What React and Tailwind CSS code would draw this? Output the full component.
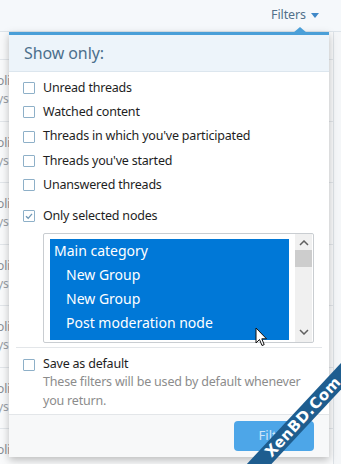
import React from "react";

const font = { fontFamily: '"Noto Sans", "Open Sans", sans-serif' };

function Box({ checked }) {
  return (
    <span className="relative inline-block w-[12px] h-[12px] shrink-0 border-[1.5px] border-[#8eb0c8] rounded-[1px] bg-white">
      {checked && (
        <svg viewBox="0 0 12 12" className="absolute left-[-1.5px] top-[-1.5px] w-[12px] h-[12px]">
          <path d="M3 6.2 L5.2 8.3 L9 3.8" fill="none" stroke="#6f97b5" strokeWidth="1.3" />
        </svg>
      )}
    </span>
  );
}

function Row({ label, checked }) {
  return (
    <div className="h-[24.25px] flex items-center pl-[14px] gap-[8px] text-[12.5px] tracking-[-0.2px] text-[#1e1e1e]">
      <Box checked={checked} />
      <span>{label}</span>
    </div>
  );
}

export default function App() {
  const rows = [0, 1, 2, 3, 4, 5, 6];
  return (
    <div className="relative w-[341px] h-[464px] overflow-hidden bg-[#f4f6f8]" style={font}>
      {/* top bar */}
      <div className="h-[32px] bg-[#f5f8fb] border-b border-[#dde4ea] flex items-center justify-end pr-[22px] gap-[5px] text-[12.5px] tracking-[-0.1px] text-[#52708a]">
        <span>Filters</span>
        <svg width="8" height="6" viewBox="0 0 8 6"><path d="M0 0 H8 L4 5 Z" fill="#3f88c8" /></svg>
      </div>
      {/* background list */}
      <div className="mr-[7px] border-r border-[#dde2e7] bg-white">
        <div className="h-[28px] border-b border-[#e2e6ea] bg-[#f8f9fa]"></div>
        {rows.map((r) => (
          <div key={r} className="h-[61.5px] border-b border-[#e2e6ea] flex flex-col justify-center text-[12px] leading-[18px] bg-[#f9fafb]">
            <span className="text-[#8a8f95] -ml-[3px]">oli</span>
            <span className="text-[#9aa0a6] -ml-[3px]">ys:</span>
          </div>
        ))}
      </div>

      {/* menu */}
      <div className="absolute left-[9px] top-[32px] w-[320px] bg-white border-t-[3px] border-[#4a9fd8] shadow-[0_3px_8px_rgba(0,0,0,0.25)]">
        <div className="absolute right-[22px] top-[-8px] w-0 h-0 border-l-[7px] border-r-[7px] border-b-[6px] border-l-transparent border-r-transparent border-b-[#4a9fd8]"></div>
        <div className="h-[37px] bg-[#edf4fa] border-b border-[#dce6ee] flex items-center pl-[15px] text-[16px] tracking-[-0.1px] text-[#4c6f8c]">
          Show only:
        </div>
        <div className="pt-[4px]">
          <Row label="Unread threads" />
          <Row label="Watched content" />
          <Row label="Threads in which you've participated" />
          <Row label="Threads you've started" />
          <Row label="Unanswered threads" />
          <div className="h-[7px]"></div>
          <Row label="Only selected nodes" checked />
          <div className="ml-[34px] mt-[4px] w-[271px] h-[110px] border border-[#c9cdd1] rounded-[2px] flex pl-[6px] pt-[5px] pr-[1px] bg-white">
            <div className="w-[240px] h-[101px] bg-[#0078d7] text-white text-[14px] leading-[24px] overflow-hidden">
              <div className="pl-[4px]">Main category</div>
              <div className="pl-[16px]">New Group</div>
              <div className="pl-[16px]">New Group</div>
              <div className="pl-[16px]">Post moderation node</div>
            </div>
            <div className="ml-[6px] w-[17px] -mt-[5px] h-[108px] bg-[#f0f0f0] flex flex-col items-center">
              <svg width="10" height="6" viewBox="0 0 10 6" className="mt-[6px]"><path d="M1 5 L5 1 L9 5" fill="none" stroke="#606060" strokeWidth="1.5" /></svg>
              <div className="mt-[4px] w-[17px] h-[17px] bg-[#cdcdcd]"></div>
              <div className="flex-1"></div>
              <svg width="10" height="6" viewBox="0 0 10 6" className="mb-[7px]"><path d="M1 1 L5 5 L9 1" fill="none" stroke="#606060" strokeWidth="1.5" /></svg>
            </div>
          </div>
          <div className="mx-[7px] mt-[4px] border-t border-[#e3e6e9]"></div>
          <div className="pt-[5px]">
            <Row label="Save as default" />
            <div className="pl-[34px] pr-[8px] text-[12.5px] tracking-[-0.2px] leading-[19px] text-[#8c8c8c] -mt-[5px] pb-[4px]">
              These filters will be used by default whenever you return.
            </div>
          </div>
        </div>
        <div className="h-[43px] border-t border-[#e3e6e9] bg-[#f7f8f9] flex items-start justify-end pr-[15px] pt-[6px]">
          <div className="w-[80px] h-[30px] rounded-[4px] bg-[#4da6e8] text-[#cfe6f8] text-[13px] flex items-center justify-center">
            Filter
          </div>
        </div>
      </div>

      {/* cursor */}
      <svg className="absolute left-[255px] top-[327px]" width="13" height="20" viewBox="0 0 13 20">
        <path d="M1 1 L1 16 L4.5 12.5 L7 18.5 L9.2 17.6 L6.8 11.8 L11.5 11.8 Z" fill="white" stroke="#111" strokeWidth="1" strokeLinejoin="round" />
      </svg>

      {/* watermark ribbon */}
      <div className="absolute left-[193px] top-[408px] w-[220px] h-[18px] bg-[#1e5d8f] rotate-[-47deg] flex items-center justify-center text-white font-bold text-[15px] tracking-[0.5px]" style={{ fontFamily: '"DejaVu Sans", sans-serif' }}>
        XenBD.Com
      </div>
    </div>
  );
}
